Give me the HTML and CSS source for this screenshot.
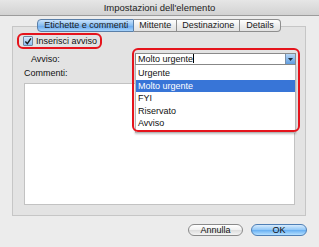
FILE: index.html
```html
<!DOCTYPE html>
<html lang="it">
<head>
    <meta charset="UTF-8">
    <title>Impostazioni dell'elemento</title>
    <link rel="stylesheet" href="styles.css">
</head>
<body>
    <!-- Title Bar -->
    <div class="titlebar">Impostazioni dell'elemento</div>

    <div class="tabbox">
        <div class="tabs">
            <div class="tab active">Etichette e commenti</div>
            <div class="tab">Mittente</div>
            <div class="tab">Destinazione</div>
            <div class="tab">Details</div>
        </div>

        <div class="panel">
            <div class="check-row">
                <label class="check-ring">
                    <span class="checkbox">
                        <svg width="9" height="9" viewBox="0 0 9 9"><path d="M1.5 4.5 L3.8 7 L7.8 1" fill="none" stroke="#1a1a1a" stroke-width="1.6"/></svg>
                    </span>
                    <span>Inserisci avviso</span>
                </label>
            </div>

            <div class="avviso-row">
                <span class="label">Avviso:</span>
                <div class="combo-wrap">
                    <div class="combo">
                        <span class="combo-text">Molto urgente<span class="caret"></span></span>
                        <span class="combo-btn">
                            <svg width="5" height="3" viewBox="0 0 5 3"><path d="M0 0 H5 L2.5 3 Z" fill="#1c2a3a"/></svg>
                        </span>
                    </div>
                    <ul class="popup">
                        <li>Urgente</li>
                        <li class="selected">Molto urgente</li>
                        <li>FYI</li>
                        <li>Riservato</li>
                        <li>Avviso</li>
                    </ul>
                    <div class="ring"></div>
                </div>
            </div>

            <div class="comment-label">Commenti:</div>
            <div class="comment-box"></div>
        </div>
    </div>

    <div class="buttons">
        <button class="btn">Annulla</button>
        <button class="btn default">OK</button>
    </div>
</body>
</html>
```

FILE: styles.css
```css
/* General Styles */
body {
    margin: 0;
    width: 319px;
    height: 247px;
    background-color: #ececec;
    font-family: 'Liberation Sans', Arial, sans-serif;
    font-size: 9px;
    color: #111;
    overflow: hidden;
}

/* Title Bar */
.titlebar {
    height: 15px;
    line-height: 15px;
    text-align: center;
    font-size: 9.5px;
    color: #222;
    background: linear-gradient(#e6e6e6, #d2d2d2);
    border-bottom: 1px solid #9c9c9c;
}

/* Tabs */
.tabbox {
    margin: 3px 13px 0 12px;
}
.tabs {
    display: flex;
    justify-content: center;
    position: relative;
    z-index: 2;
    height: 13px;
}
.tab {
    box-sizing: border-box;
    height: 13px;
    line-height: 11px;
    padding: 0 5px;
    border: 1px solid #8e8e8e;
    border-left: none;
    background: linear-gradient(#ffffff, #ececec 55%, #e2e2e2);
    color: #1a1a1a;
    white-space: nowrap;
}
.tab:first-child {
    border-left: 1px solid #8e8e8e;
    border-radius: 4px 0 0 4px;
    padding: 0 5px 0 6px;
}
.tab:last-child {
    border-radius: 0 4px 4px 0;
    padding: 0 6px;
}
.tab.active {
    background: linear-gradient(#c9e2fb, #86bdf2 50%, #6aaaf0 55%, #a6d3fb);
    border-color: #5a7fa8;
}

/* Panel */
.panel {
    box-sizing: border-box;
    height: 190px;
    margin-top: -6px;
    padding: 6px 10px 10px 4px;
    background-color: #e3e3e3;
    border: 1px solid #c6c6c6;
    display: flex;
    flex-direction: column;
}
.check-row {
    display: flex;
}
.check-ring {
    display: flex;
    align-items: center;
    gap: 3px;
    height: 12px;
    padding: 0 3px 0 4px;
    border: 2px solid #e5141c;
    border-radius: 6px;
    white-space: nowrap;
}
.checkbox {
    box-sizing: border-box;
    width: 10px;
    height: 10px;
    border: 1px solid #6f85a0;
    border-radius: 1px;
    background: linear-gradient(#d8eafc, #8dbff2);
    display: flex;
    align-items: center;
    justify-content: center;
}

.avviso-row {
    display: grid;
    grid-template-columns: 104px 1fr;
    margin-top: 4px;
    padding-left: 14px;
    align-items: center;
}
.label {
    line-height: 12px;
}
.combo-wrap {
    position: relative;
    margin-right: -1px;
}
.combo {
    box-sizing: border-box;
    height: 12px;
    display: flex;
    background: #fff;
    border: 1px solid #8a8a8a;
}
.combo-text {
    flex: 1;
    line-height: 10px;
    padding-left: 2px;
}
.caret {
    display: inline-block;
    width: 1px;
    height: 9px;
    background: #000;
    vertical-align: -1px;
}
.combo-btn {
    width: 9px;
    border-left: 1px solid #7a90a8;
    background: linear-gradient(#b8d6f5, #5f9de0);
    display: flex;
    align-items: center;
    justify-content: center;
}

/* Dropdown list over the comments */
.popup {
    position: absolute;
    top: 12px;
    left: 0;
    right: 0;
    margin: 0;
    padding: 2px 0;
    list-style: none;
    background: #fff;
    border: 1px solid #b5b5b5;
    border-top: none;
    box-shadow: 0 1px 2px rgba(0, 0, 0, 0.25);
    z-index: 3;
}
.popup li {
    height: 12.5px;
    line-height: 12.5px;
    padding-left: 2px;
}
.popup li.selected {
    background-color: #3875d7;
    color: #fff;
}
.ring {
    position: absolute;
    top: -5px;
    left: -3px;
    right: -4px;
    bottom: -67px;
    border: 2px solid #e5141c;
    border-radius: 6px;
    z-index: 4;
}

.comment-label {
    margin-top: 3px;
    padding-left: 7px;
    line-height: 11px;
}
.comment-box {
    flex: 1;
    margin: 4px 0 0 7px;
    background: #fff;
    border: 1px solid #c2c2c2;
}

/* Buttons */
.buttons {
    display: flex;
    justify-content: flex-end;
    gap: 8px;
    margin: 8px 12px 0 0;
}
.btn {
    box-sizing: border-box;
    width: 55px;
    height: 12px;
    padding: 0;
    font-family: 'Liberation Sans', Arial, sans-serif;
    font-size: 9px;
    line-height: 10px;
    color: #111;
    border: 1px solid #8a8a8a;
    border-radius: 6px;
    background: linear-gradient(#ffffff, #f0f0f0 50%, #dedede 55%, #f4f4f4);
}
.btn.default {
    width: 56px;
    border-color: #4f7fb5;
    background: linear-gradient(#d6ebfd, #8fc6f7 50%, #6bb2f3 55%, #b6e0ff);
}
```
